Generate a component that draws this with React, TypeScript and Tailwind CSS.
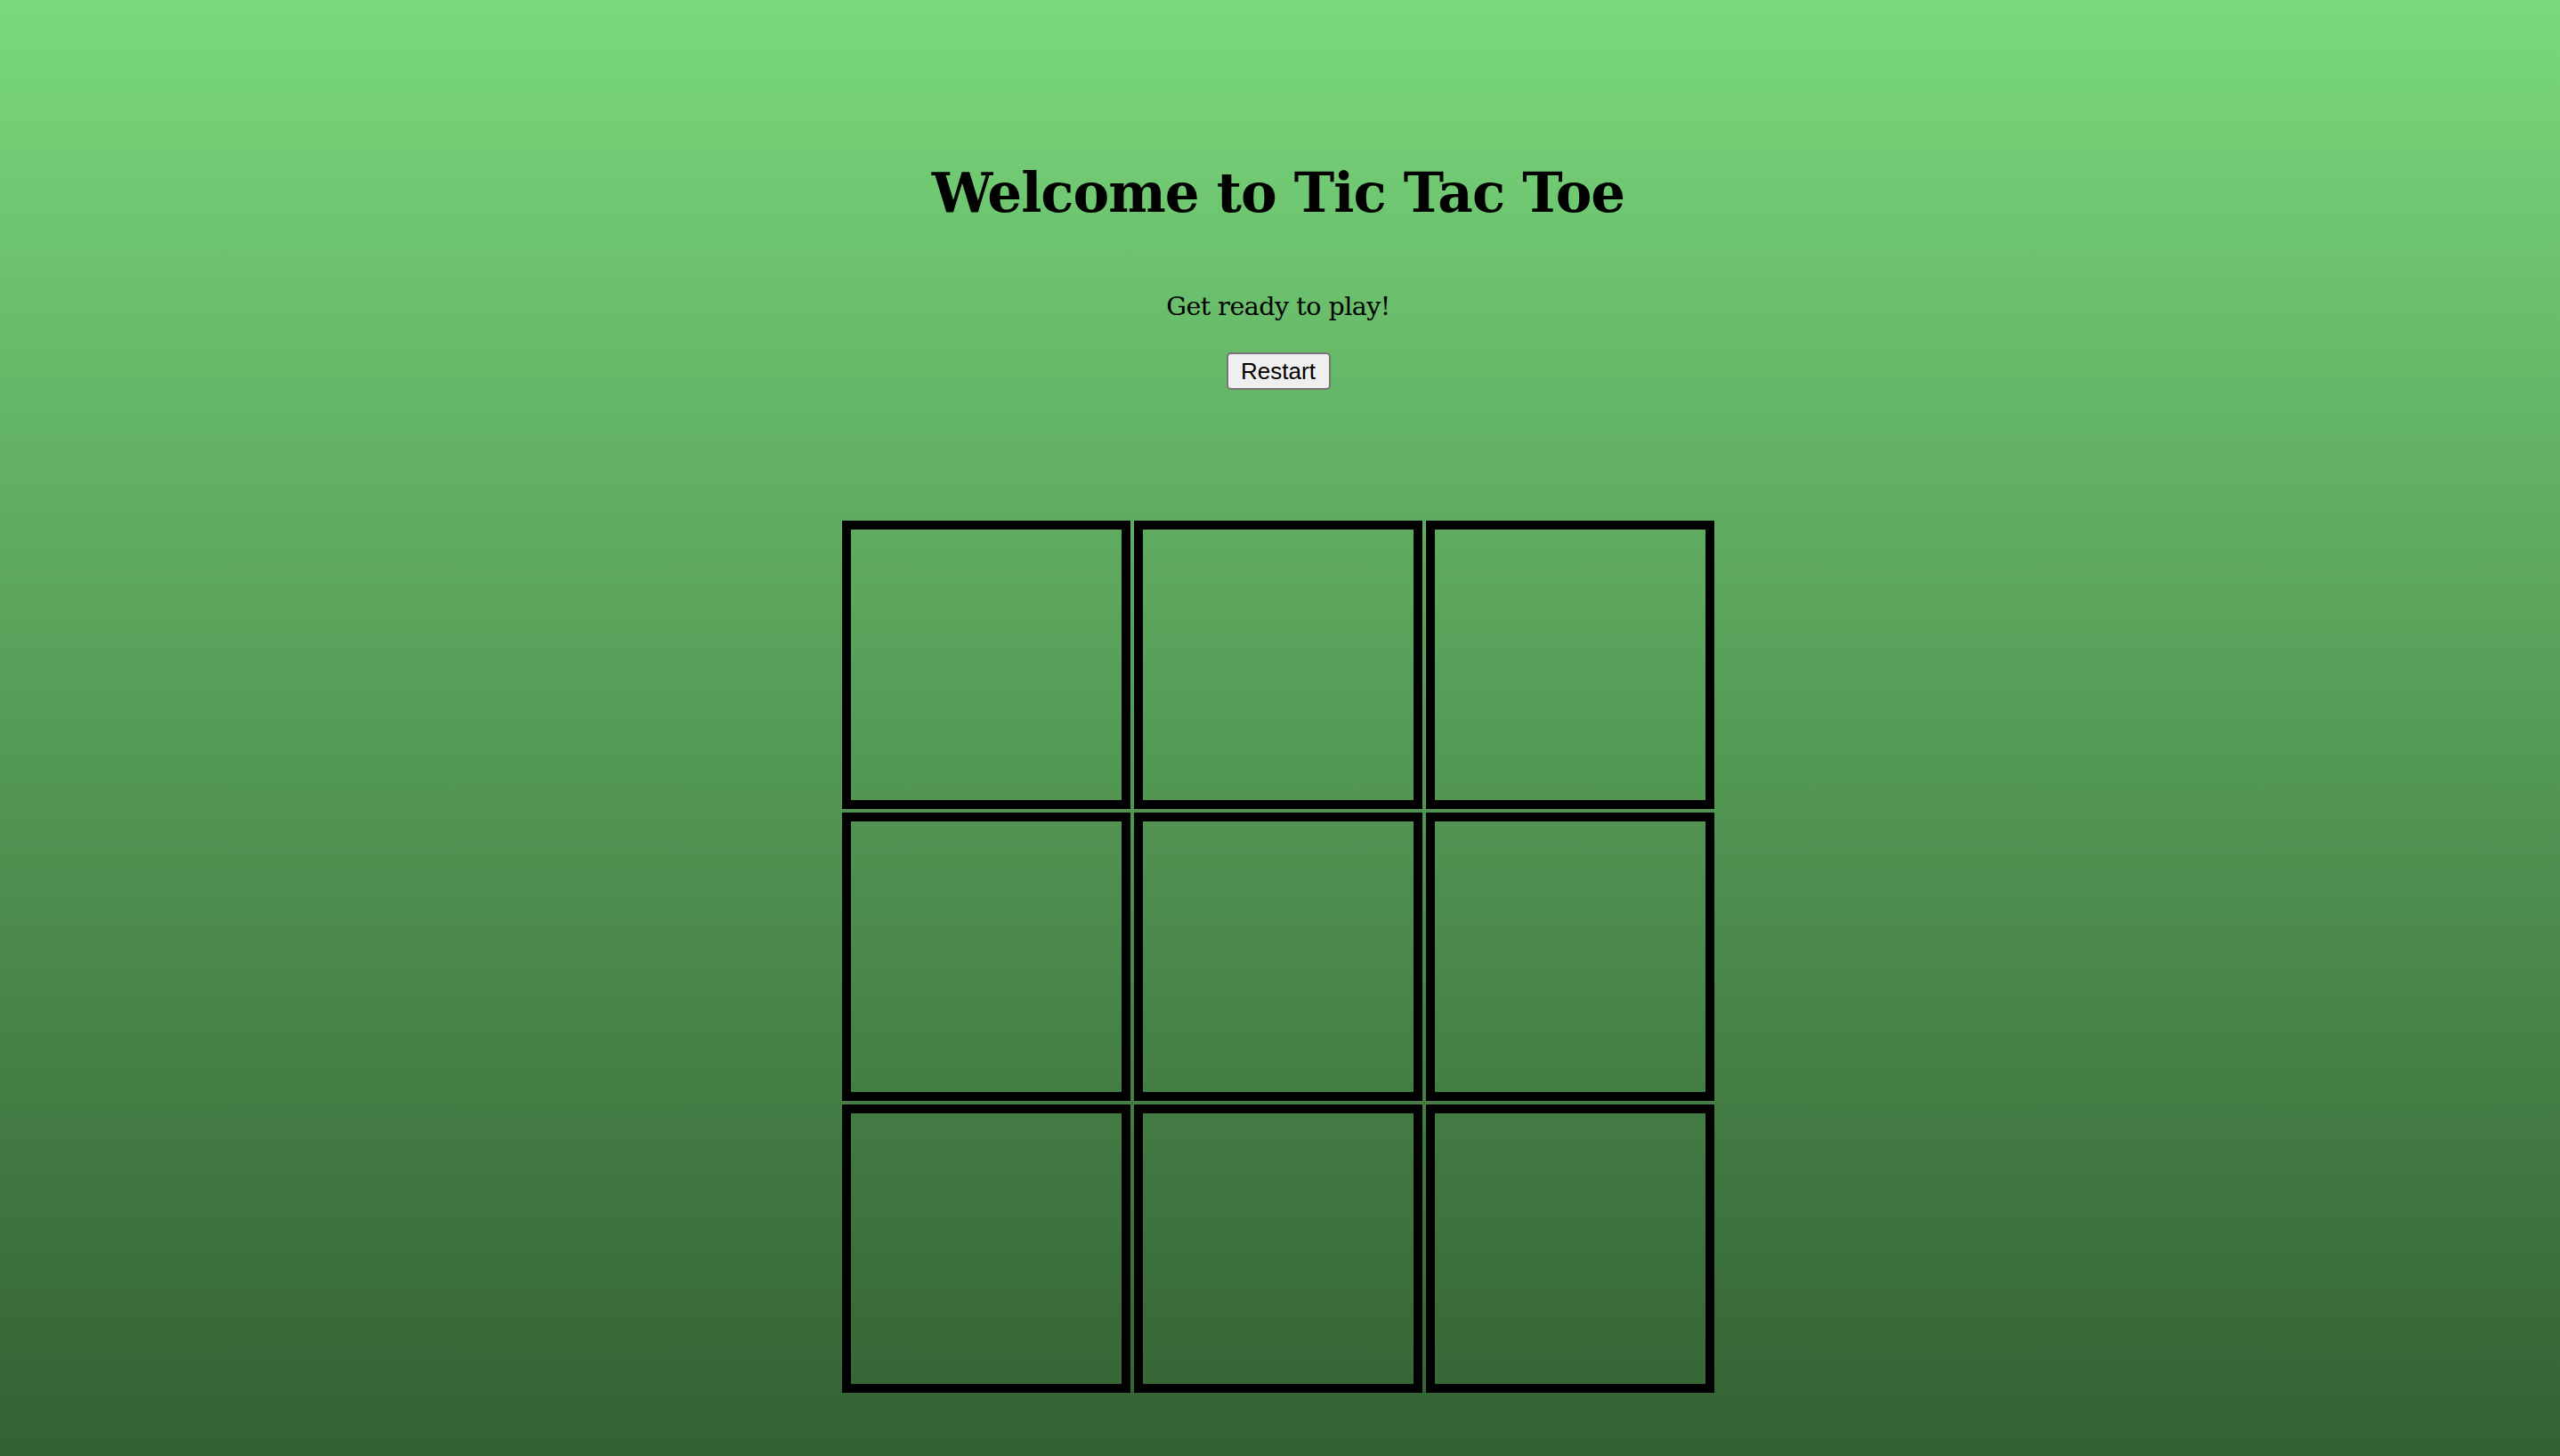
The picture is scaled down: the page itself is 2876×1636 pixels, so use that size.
import React from "react";

export default function App() {
  const cells = Array.from({ length: 9 }, (_, i) => i);
  return (
    <div className="w-full h-[1636px] overflow-hidden pr-[4px] bg-gradient-to-b from-[#7ad97c] to-[#336133] flex flex-col items-center">
      <h1 className="mt-[177px] h-[80px] leading-[80px] text-[61px] font-bold text-black tracking-[-1px] whitespace-nowrap [font-family:'DejaVu_Serif',Georgia,serif]">
        Welcome to Tic Tac Toe
      </h1>
      <p className="mt-[68px] h-[40px] leading-[40px] text-[28.5px] text-black tracking-[-0.5px] whitespace-nowrap [font-family:'DejaVu_Serif',Georgia,serif]">
        Get ready to play!
      </p>
      <button className="mt-[31px] w-[117px] h-[42px] border-2 border-[#767676] rounded-[5px] bg-[#efefef] text-black text-[26px] leading-[30px] [font-family:'Liberation_Sans',Arial,sans-serif]">
        Restart
      </button>
      <div className="mt-[147px] grid grid-cols-[repeat(3,324px)] grid-rows-[repeat(3,324px)] gap-[4px]">
        {cells.map((i) => (
          <div key={i} className="border-[10px] border-black" />
        ))}
      </div>
    </div>
  );
}
